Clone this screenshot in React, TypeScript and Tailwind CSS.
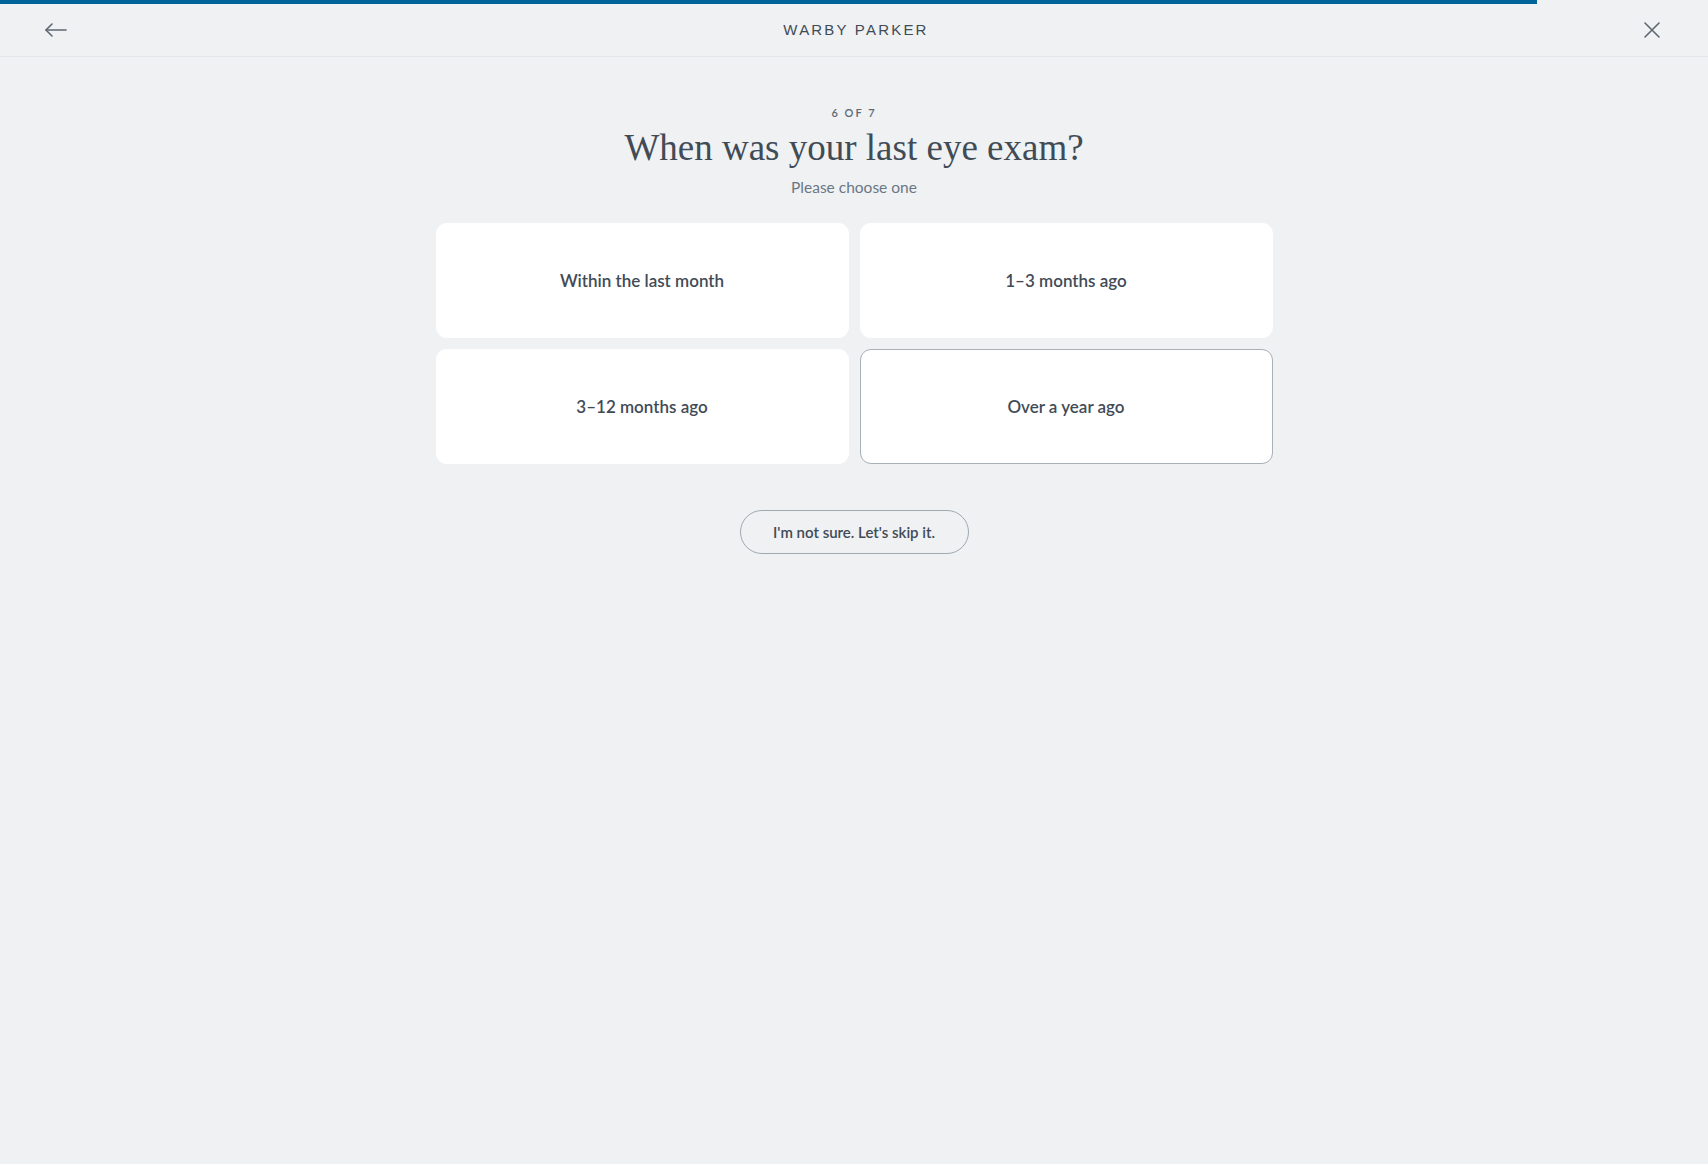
import React from 'react'

const options = ['Within the last month', '1–3 months ago', '3–12 months ago', 'Over a year ago']

function ArrowLeft() {
  return (
    <svg width="24" height="24" viewBox="0 0 24 24" fill="none" stroke="#5d6873" strokeWidth="1.6" strokeLinecap="round" strokeLinejoin="round">
      <path d="M22 12H2" />
      <path d="M8 6l-6 6 6 6" />
    </svg>
  )
}

function CloseIcon() {
  return (
    <svg width="18" height="18" viewBox="0 0 18 18" fill="none" stroke="#5d6873" strokeWidth="1.6" strokeLinecap="round">
      <path d="M2 2l14 14M16 2L2 16" />
    </svg>
  )
}

export default function App() {
  const sans = { fontFamily: 'Lato, "Open Sans", sans-serif' }
  return (
    <div className="min-h-[1164px] w-full bg-[#eff1f3] text-[#414b56]" style={sans}>
      <div className="h-[4px] w-full">
        <div className="h-full w-[90%] bg-[#00649b]" />
      </div>
      <header className="flex h-[53px] items-center justify-between border-b border-[#e4e7ea] pl-[44px] pr-[40px]">
        <button className="flex h-8 w-8 items-center">
          <ArrowLeft />
        </button>
        <div className="text-[15px] tracking-[2.2px] text-[#414b56]" style={{ fontFamily: '"Liberation Sans", sans-serif' }}>
          WARBY PARKER
        </div>
        <button className="flex h-8 w-8 items-center justify-center">
          <CloseIcon />
        </button>
      </header>

      <main className="flex flex-col items-center pt-[48px]">
        <div className="text-[11px] font-semibold tracking-[2px] text-[#5d6873]">6 OF 7</div>
        <h1 className="mt-[4px] text-[37px] leading-[44px] text-[#414b56]" style={{ fontFamily: '"Liberation Serif", serif' }}>
          When was your last eye exam?
        </h1>
        <p className="mt-[6px] text-[15.5px] text-[#6b7783]">Please choose one</p>

        <div className="mt-[24px] grid w-[837px] grid-cols-2 gap-[11px]">
          {options.map((o, i) => (
            <button
              key={o}
              className={`flex h-[115px] items-center justify-center rounded-[11px] bg-white text-[17px] font-semibold text-[#414b56] ${
                i === 3 ? 'border border-[#a8b0b8]' : 'border border-transparent'
              }`}
            >
              {o}
            </button>
          ))}
        </div>

        <button className="mt-[46px] h-[44px] w-[229px] rounded-full border border-[#a0a9b2] text-[15px] font-semibold text-[#414b56]">
          I'm not sure. Let's skip it.
        </button>
      </main>
    </div>
  )
}
